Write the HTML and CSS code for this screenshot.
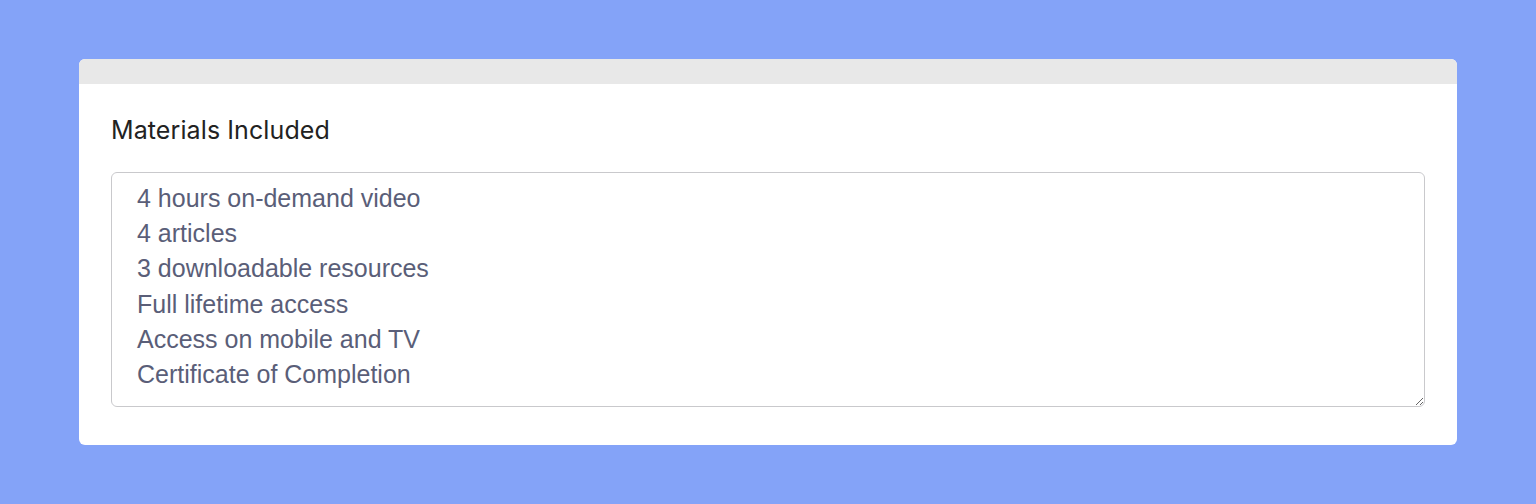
FILE: index.html
```html
<!DOCTYPE html>
<html lang="en">
  <head>
    <meta charset="UTF-8" />
    <meta name="viewport" content="width=device-width, initial-scale=1.0" />
    <title>Materials Included</title>
    <link rel="stylesheet" href="styles.css">
  </head>
  <body>
    <div class="page">
      <div class="card">
        <div class="card-header"></div>
        <div class="card-body">
          <label class="field-label" for="materials">Materials Included</label>
          <textarea id="materials" class="field-input" rows="6">4 hours on-demand video
4 articles
3 downloadable resources
Full lifetime access
Access on mobile and TV
Certificate of Completion</textarea>
        </div>
      </div>
    </div>
  </body>
</html>
```

FILE: styles.css
```css
body {
  margin: 0;
  background: #84a3f8;
  font-family: Inter, "Noto Sans", sans-serif;
}
.page {
  padding: 59px 79px;
}
.card {
  background: white;
  border-radius: 6px;
  overflow: hidden;
}
.card-header {
  height: 25px;
  background: #e8e8e8;
}
.card-body {
  display: flex;
  flex-direction: column;
  padding: 31px 32px 38px;
}
.field-label {
  font-size: 25px;
  line-height: 30px;
  letter-spacing: 0.1px;
  color: #222;
  margin-bottom: 27px;
}
.field-input {
  box-sizing: border-box;
  height: 235px;
  padding: 8px 25px;
  border: 1px solid #c9c9cc;
  border-radius: 6px;
  font-family: "Liberation Sans", Arial, sans-serif;
  font-size: 25px;
  line-height: 35.2px;
  color: #5a5e78;
  resize: vertical;
  outline: none;
}
```
